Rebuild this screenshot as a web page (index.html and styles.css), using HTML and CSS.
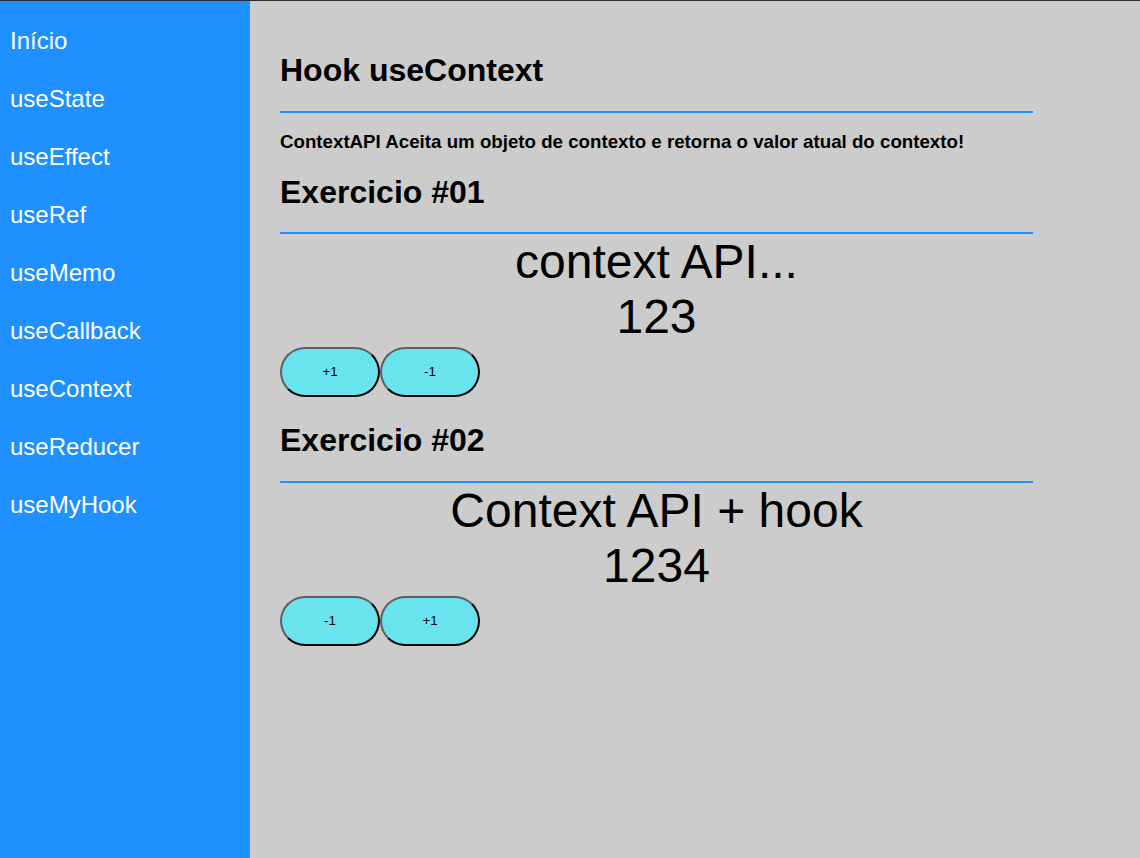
FILE: index.html
```html
<!DOCTYPE html>
<html lang="pt-BR">
<head>
<meta charset="utf-8">
<title>Hook useContext</title>
<link rel="stylesheet" href="styles.css">
</head>
<body>
<div class="app">
  <nav class="sidebar">
    <a class="nav-link" href="#">Início</a>
    <a class="nav-link" href="#">useState</a>
    <a class="nav-link" href="#">useEffect</a>
    <a class="nav-link" href="#">useRef</a>
    <a class="nav-link" href="#">useMemo</a>
    <a class="nav-link" href="#">useCallback</a>
    <a class="nav-link" href="#">useContext</a>
    <a class="nav-link" href="#">useReducer</a>
    <a class="nav-link" href="#">useMyHook</a>
  </nav>
  <main class="main">
    <div class="content">
      <h1 class="title">Hook useContext</h1>
      <hr class="divider">
      <h3 class="subtitle">ContextAPI Aceita um objeto de contexto e retorna o valor atual do contexto!</h3>

      <h1 class="title">Exercicio #01</h1>
      <hr class="divider">
      <div class="big-text">
        <div>context API...</div>
        <div>123</div>
      </div>
      <div class="buttons">
        <button class="btn">+1</button><button class="btn">-1</button>
      </div>

      <h1 class="title">Exercicio #02</h1>
      <hr class="divider">
      <div class="big-text">
        <div>Context API + hook</div>
        <div>1234</div>
      </div>
      <div class="buttons">
        <button class="btn">-1</button><button class="btn">+1</button>
      </div>
    </div>
  </main>
</div>
</body>
</html>
```
FILE: styles.css
```css
html, body {
  margin: 0;
  padding: 0;
  height: 100%;
}

body {
  font-family: "Liberation Sans", Arial, sans-serif;
  background: #cccccc;
  color: #000;
  border-top: 1px solid #2c2f38;
  box-sizing: border-box;
}

.app {
  display: flex;
  min-height: 857px;
}

.sidebar {
  width: 250px;
  flex-shrink: 0;
  background: #1e90ff;
  display: flex;
  flex-direction: column;
  padding-top: 11px;
  box-sizing: border-box;
}

.nav-link {
  display: block;
  color: #ffffff;
  text-decoration: none;
  font-size: 24px;
  line-height: 28px;
  padding: 15px 10px;
}

.main {
  flex: 1;
  padding: 30px 30px;
}

.content {
  width: 753px;
}

.title {
  font-size: 32px;
  font-weight: bold;
  margin: 21.44px 0;
}

.divider {
  border: 0;
  border-top: 2px solid #1e90ff;
  height: 0;
  margin: 21.44px 0 0 0;
}

.subtitle {
  font-size: 18.72px;
  line-height: 20.5px;
  font-weight: bold;
  margin: 18.72px 0;
}

.big-text {
  font-size: 48px;
  text-align: center;
}

.buttons {
  display: flex;
  padding: 3px 0 4px;
}

.btn {
  width: 100px;
  height: 50px;
  box-sizing: border-box;
  border-radius: 25px;
  background: #69e4ef;
  border-width: 2px;
  border-style: solid;
  border-color: #5e5e5e #000 #000 #5e5e5e;
  font-family: "Liberation Sans", Arial, sans-serif;
  font-size: 13.33px;
  color: #000;
  padding: 1px 6px;
  margin: 0;
}
```
